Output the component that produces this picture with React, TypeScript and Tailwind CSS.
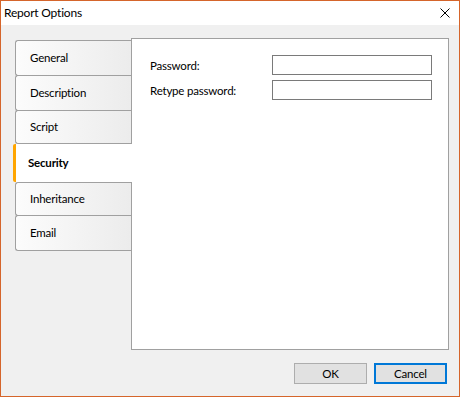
import React from "react";

const tabs = [
  { label: "General", cls: "h-[36px]" },
  { label: "Description", cls: "h-[36px] -mt-px" },
  { label: "Script", cls: "h-[34px] -mt-px" },
  { label: "Security", sel: true, cls: "h-[38px]" },
  { label: "Inheritance", cls: "h-[34px]" },
  { label: "Email", cls: "h-[36px] -mt-px" },
];

export default function App() {
  return (
    <div
      className="w-[460px] h-[397px] border border-[#d5652b] bg-[#f0f0f0] flex flex-col text-[11.5px] tracking-[-0.2px] text-black"
      style={{ fontFamily: '"Segoe UI", Lato, sans-serif' }}
    >
      <div className="h-[24px] bg-white flex items-center justify-between pl-[3px] pr-[9px] shrink-0">
        <span className="leading-none text-[12px] tracking-[-0.2px]">Report Options</span>
        <svg width="10" height="10" viewBox="0 0 10 10" className="block">
          <path d="M0.5 0.5 L9.5 9.5 M9.5 0.5 L0.5 9.5" stroke="#000" strokeWidth="1" />
        </svg>
      </div>
      <div className="flex-1 flex flex-col pt-[13px] pl-[14px] pr-[10px]">
        <div className="flex">
          <div className="w-[116px] mt-[2px] flex flex-col">
            {tabs.map((t) =>
              t.sel ? (
                <div
                  key={t.label}
                  className={`${t.cls} relative z-10 -ml-[2px] -mr-px bg-white border-l-[3px] border-[#ffa500] rounded-l-[2px] flex items-center pl-[12px] font-bold`}
                >
                  {t.label}
                </div>
              ) : (
                <div
                  key={t.label}
                  className={`${t.cls} border border-r-0 border-[#a0a0a0] rounded-l-[3px] bg-gradient-to-r from-[#fcfcfc] to-[#ececec] flex items-center pl-[14px]`}
                >
                  {t.label}
                </div>
              )
            )}
          </div>
          <div className="w-[318px] h-[312px] border border-[#a0a0a0] bg-white pt-[16px] pl-[18px]">
            <div className="flex items-center h-[20px]">
              <span className="w-[122px] pt-[2px]">Password:</span>
              <div className="w-[160px] h-[20px] border border-[#7a7a7a] bg-white" />
            </div>
            <div className="flex items-center h-[20px] mt-[5px]">
              <span className="w-[122px] pt-[1px]">Retype password:</span>
              <div className="w-[160px] h-[20px] border border-[#7a7a7a] bg-white" />
            </div>
          </div>
        </div>
        <div className="flex justify-end gap-[7px] mt-[13px] pr-[2px]">
          <div className="w-[73px] h-[21px] border border-[#adadad] bg-[#e1e1e1] flex items-center justify-center">
            OK
          </div>
          <div className="w-[73px] h-[21px] border-2 border-[#0078d7] bg-[#e1e1e1] flex items-center justify-center">
            Cancel
          </div>
        </div>
      </div>
    </div>
  );
}
